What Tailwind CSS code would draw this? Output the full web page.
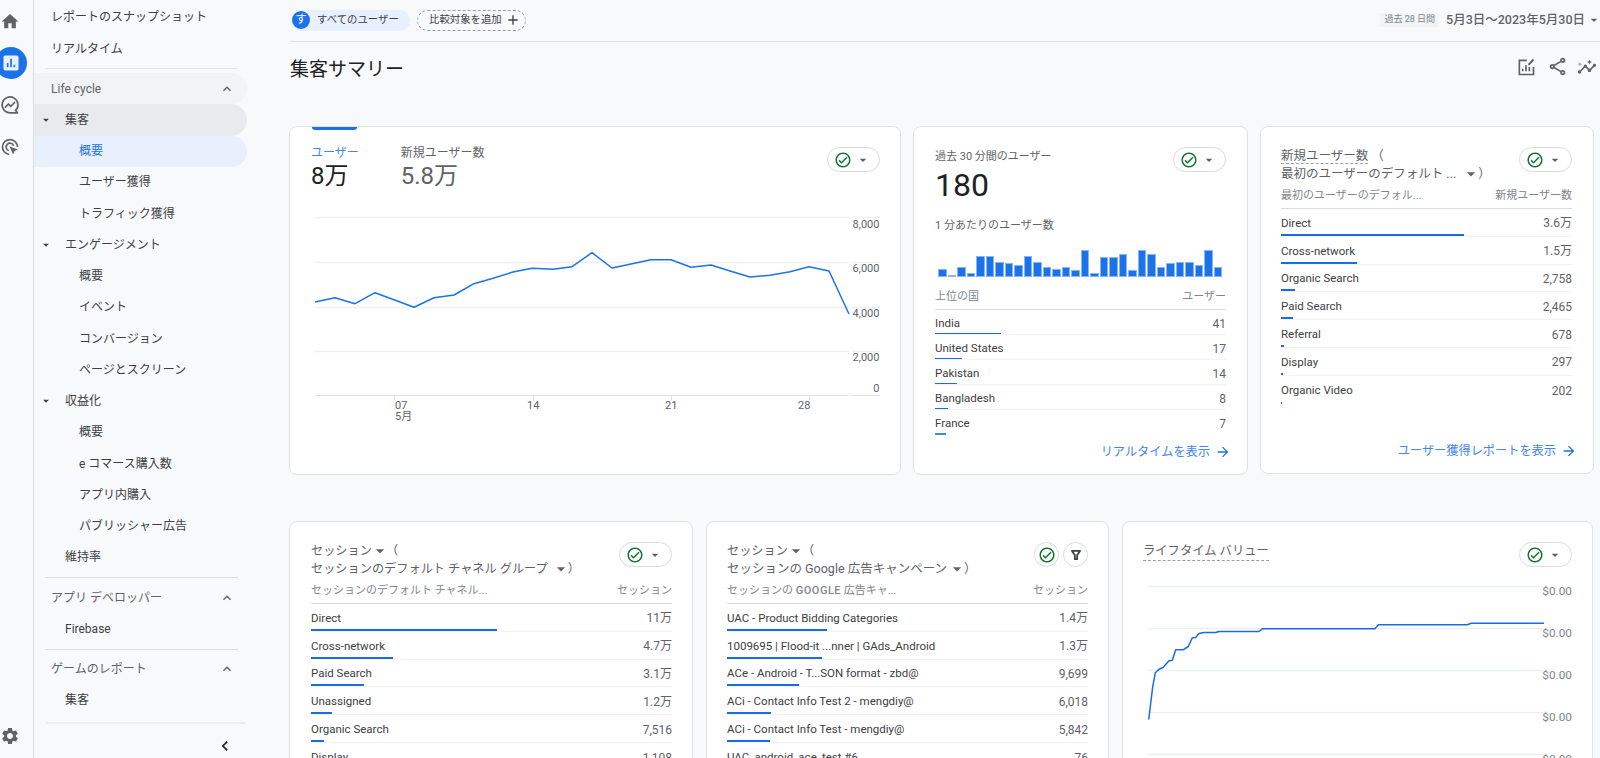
<!DOCTYPE html>
<html lang="ja">
<head>
    <meta charset="UTF-8" />
    <meta name="viewport" content="width=device-width, initial-scale=1.0" />
    <script src="https://cdn.jsdelivr.net/npm/@tailwindcss/browser@4"></script>
    <title>集客サマリー</title>
</head>
<body class="bg-[#f8f9fa]">
<div class="flex h-[758px] w-[1600px] overflow-hidden bg-[#f8f9fa] text-[#3c4043] [font-family:Roboto,'Noto_Sans_CJK_JP',sans-serif]">

    <!-- icon rail -->
    <div class="flex w-[34px] shrink-0 flex-col border-r border-[#dadce0] pt-[1px]">
        <div class="flex h-[41.6px] items-center justify-center pr-[13px]">
            <svg class="h-[21px] w-[21px] fill-[#5f6368]" viewBox="0 0 24 24"><path d="M10 20v-6h4v6h5v-8h3L12 3 2 12h3v8z"/></svg>
        </div>
        <div class="flex h-[41.6px] items-center">
            <div class="-ml-[5px] flex h-[32px] w-[32px] shrink-0 items-center justify-center rounded-full bg-[#1a73e8]">
                <svg class="h-[20px] w-[20px]" viewBox="0 0 24 24"><rect x="3" y="3" width="18" height="18" rx="2" fill="#e8f0fe"/><path d="M7 12h2v5H7zM11 7h2v10h-2zM15 14h2v3h-2z" fill="#1a73e8"/></svg>
            </div>
        </div>
        <div class="flex h-[41.6px] items-center justify-center pr-[13px]">
            <svg class="h-[20px] w-[20px]" viewBox="0 0 24 24" fill="none" stroke="#5f6368" stroke-width="2"><path d="M21 21l-2.4-2.2A9.5 9.5 0 1 0 12 21.4h9z" stroke-linejoin="round"/><path d="M6.5 14.5l3.5-3.5 3 2.5 4.5-4.5" stroke-linecap="round"/></svg>
        </div>
        <div class="flex h-[41.6px] items-center justify-center pr-[13px]">
            <svg class="h-[20px] w-[20px]" viewBox="0 0 24 24" fill="none" stroke="#5f6368" stroke-width="2"><path d="M11 21a9 9 0 1 1 10-9"/><path d="M10.5 16.5a4.7 4.7 0 1 1 6-6"/><path d="M11.5 11.5l10 3.6-4 1.8-1.8 4z" fill="#5f6368" stroke="none"/></svg>
        </div>
        <div class="mt-auto mb-[11px] flex justify-center pr-[13px]">
            <svg class="h-[22px] w-[22px] fill-[#5f6368]" viewBox="0 0 24 24"><path d="M19.14 12.94c.04-.3.06-.61.06-.94 0-.32-.02-.64-.07-.94l2.03-1.58c.18-.14.23-.41.12-.61l-1.92-3.32c-.12-.22-.37-.29-.59-.22l-2.39.96c-.5-.38-1.03-.7-1.62-.94l-.36-2.54c-.04-.24-.24-.41-.48-.41h-3.84c-.24 0-.43.17-.47.41l-.36 2.54c-.59.24-1.13.57-1.62.94l-2.39-.96c-.22-.08-.47 0-.59.22L2.74 8.87c-.12.21-.08.47.12.61l2.03 1.58c-.05.3-.09.63-.09.94s.02.64.07.94l-2.03 1.58c-.18.14-.23.41-.12.61l1.92 3.32c.12.22.37.29.59.22l2.39-.96c.5.38 1.03.7 1.62.94l.36 2.54c.05.24.24.41.48.41h3.84c.24 0 .44-.17.47-.41l.36-2.54c.59-.24 1.13-.56 1.62-.94l2.39.96c.22.08.47 0 .59-.22l1.92-3.32c.12-.22.07-.47-.12-.61l-2.01-1.58zM12 15.6c-1.98 0-3.6-1.62-3.6-3.6s1.62-3.6 3.6-3.6 3.6 1.62 3.6 3.6-1.62 3.6-3.6 3.6z"/></svg>
        </div>
    </div>

    <!-- report nav -->
    <nav class="flex w-[255px] shrink-0 flex-col pt-[1px] text-[12px] [&>*]:shrink-0">
        <div class="flex h-[32px] items-center pl-[17px]">レポートのスナップショット</div>
        <div class="flex h-[32px] items-center pl-[17px]">リアルタイム</div>
        <div class="ml-[11px] mt-[3px] mb-[4px] w-[193px] border-t border-[#e3e5e8]"></div>
        <div class="flex h-[31.25px] w-[213px] items-center justify-between rounded-r-full bg-[#f1f3f4] pl-[17px] pr-[12px] text-[#5f6368]">
            <span>Life cycle</span>
            <svg class="h-[16px] w-[16px] fill-[#5f6368]" viewBox="0 0 24 24"><path d="M7.4 15.4L12 10.8l4.6 4.6L18 14l-6-6-6 6z"/></svg>
        </div>
        <div class="flex h-[31.25px] w-[213px] items-center rounded-r-full bg-[#e8eaed] pl-[5px]">
            <svg class="mr-[12px] h-[14px] w-[14px] fill-[#3c4043]" viewBox="0 0 24 24"><path d="M7 10l5 5 5-5z"/></svg>集客
        </div>
        <div class="flex h-[31.25px] w-[213px] items-center rounded-r-full bg-[#e8f0fe] pl-[45px] text-[#1a73e8]">概要</div>
        <div class="flex h-[31.25px] items-center pl-[45px]">ユーザー獲得</div>
        <div class="flex h-[31.25px] items-center pl-[45px]">トラフィック獲得</div>
        <div class="flex h-[31.25px] items-center pl-[5px]">
            <svg class="mr-[12px] h-[14px] w-[14px] fill-[#3c4043]" viewBox="0 0 24 24"><path d="M7 10l5 5 5-5z"/></svg>エンゲージメント
        </div>
        <div class="flex h-[31.25px] items-center pl-[45px]">概要</div>
        <div class="flex h-[31.25px] items-center pl-[45px]">イベント</div>
        <div class="flex h-[31.25px] items-center pl-[45px]">コンバージョン</div>
        <div class="flex h-[31.25px] items-center pl-[45px]">ページとスクリーン</div>
        <div class="flex h-[31.25px] items-center pl-[5px]">
            <svg class="mr-[12px] h-[14px] w-[14px] fill-[#3c4043]" viewBox="0 0 24 24"><path d="M7 10l5 5 5-5z"/></svg>収益化
        </div>
        <div class="flex h-[31.25px] items-center pl-[45px]">概要</div>
        <div class="flex h-[31.25px] items-center pl-[45px]">e コマース購入数</div>
        <div class="flex h-[31.25px] items-center pl-[45px]">アプリ内購入</div>
        <div class="flex h-[31.25px] items-center pl-[45px]">パブリッシャー広告</div>
        <div class="flex h-[31.25px] items-center pl-[31px]">維持率</div>
        <div class="ml-[11px] mt-[4px] mb-[4px] w-[193px] border-t border-[#dadce0]"></div>
        <div class="flex h-[31.25px] w-[213px] items-center justify-between pl-[17px] pr-[12px] text-[#5f6368]">
            <span>アプリ デベロッパー</span>
            <svg class="h-[16px] w-[16px] fill-[#5f6368]" viewBox="0 0 24 24"><path d="M7.4 15.4L12 10.8l4.6 4.6L18 14l-6-6-6 6z"/></svg>
        </div>
        <div class="flex h-[31.25px] items-center pl-[31px]">Firebase</div>
        <div class="ml-[11px] mt-[4px] mb-[4px] w-[193px] border-t border-[#dadce0]"></div>
        <div class="flex h-[31.25px] w-[213px] items-center justify-between pl-[17px] pr-[12px] text-[#5f6368]">
            <span>ゲームのレポート</span>
            <svg class="h-[16px] w-[16px] fill-[#5f6368]" viewBox="0 0 24 24"><path d="M7.4 15.4L12 10.8l4.6 4.6L18 14l-6-6-6 6z"/></svg>
        </div>
        <div class="flex h-[31.25px] items-center pl-[31px]">集客</div>
        <div class="ml-[12px] mt-[6px] w-[199px] border-t-2 border-[#ebedef]"></div>
        <div class="flex h-[44px] w-[201px] items-center justify-end">
            <svg class="h-[20px] w-[20px] fill-[#202124]" viewBox="0 0 24 24"><path d="M15.4 7.4L14 6l-6 6 6 6 1.4-1.4L10.8 12z"/></svg>
        </div>
    </nav>

    <main class="min-w-0 flex-1">
        <!-- top bar -->
        <div class="ml-[1px] flex h-[42px] items-center justify-between border-b border-[#dee0e3] pb-[1px] pl-[2px]">
            <div class="flex items-center gap-[7px] text-[10.4px]">
                <div class="flex h-[21px] w-[118px] items-center rounded-full bg-[#e8f0fe]">
                    <span class="flex h-[18px] w-[18px] items-center justify-center rounded-full bg-[#1a73e8] text-[11px] text-white">す</span>
                    <span class="ml-[7px]">すべてのユーザー</span>
                </div>
                <div class="flex h-[21px] w-[109px] items-center rounded-full border border-dashed border-[#9aa0a6] pl-[11px]">
                    比較対象を追加
                    <svg class="ml-[3px] h-[16px] w-[16px] fill-[#3c4043]" viewBox="0 0 24 24"><path d="M19 13h-6v6h-2v-6H5v-2h6V5h2v6h6z"/></svg>
                </div>
            </div>
            <div class="-mr-[2px] flex items-center">
                <span class="flex h-[14px] items-center bg-[#f1f3f4] px-[4px] text-[9px] text-[#80868b]">過去 28 日間</span>
                <span class="ml-[7px] text-[12.5px] font-medium text-[#5f6368]">5月3日～2023年5月30日</span>
                <svg class="ml-[1px] h-[16px] w-[16px] fill-[#5f6368]" viewBox="0 0 24 24"><path d="M7 10l5 5 5-5z"/></svg>
            </div>
        </div>

        <!-- title row -->
        <div class="flex h-[84px] items-start justify-between pl-[1px] pt-[14px]">
            <h1 class="text-[19px] leading-[28px] text-[#202124]">集客サマリー</h1>
            <div class="mr-[5px] flex items-center">
                <svg class="h-[20px] w-[20px]" viewBox="0 0 24 24" fill="none" stroke="#5f6368" stroke-width="2"><path d="M13 4H4v17h17v-9"/><path d="M8 17v-3M12 17V10M16 17v-5" /><path d="M15 9.5l6-6.5" stroke-width="2.4"/></svg>
                <svg class="ml-[11px] h-[21px] w-[21px] fill-[#5f6368]" viewBox="0 0 24 24"><path d="M18 16.08c-.76 0-1.44.3-1.96.77L8.91 12.7c.05-.23.09-.46.09-.7s-.04-.47-.09-.7l7.05-4.11c.54.5 1.25.81 2.04.81 1.66 0 3-1.34 3-3s-1.34-3-3-3-3 1.34-3 3c0 .24.04.47.09.7L8.04 9.81C7.5 9.31 6.79 9 6 9c-1.66 0-3 1.34-3 3s1.34 3 3 3c.79 0 1.5-.31 2.04-.81l7.12 4.16c-.05.21-.08.43-.08.65 0 1.61 1.31 2.92 2.92 2.92 1.61 0 2.92-1.31 2.92-2.92s-1.31-2.92-2.92-2.92zM18 4c.55 0 1 .45 1 1s-.45 1-1 1-1-.45-1-1 .45-1 1-1zM6 13c-.55 0-1-.45-1-1s.45-1 1-1 1 .45 1 1-.45 1-1 1zm12 7.02c-.55 0-1-.45-1-1s.45-1 1-1 1 .45 1 1-.45 1-1 1z"/></svg>
                <svg class="-mr-[2px] ml-[9px] h-[20px] w-[20px] fill-[#5f6368]" viewBox="0 0 24 24"><path d="M21 8c-1.45 0-2.26 1.44-1.93 2.51l-3.55 3.56c-.3-.09-.74-.09-1.04 0l-2.55-2.55C12.27 10.45 11.46 9 10 9c-1.45 0-2.27 1.44-1.93 2.52l-4.56 4.55C2.44 15.74 1 16.55 1 18c0 1.1.9 2 2 2 1.45 0 2.26-1.44 1.93-2.51l4.55-4.56c.3.09.74.09 1.04 0l2.55 2.55C12.73 16.55 13.54 18 15 18c1.45 0 2.27-1.44 1.93-2.52l3.56-3.55c1.07.33 2.51-.48 2.51-1.93 0-1.1-.9-2-2-2z"/><path d="M15 9l.9-2L18 6l-2.1-.9L15 3l-.9 2.1L12 6l2.1 1zM3.500 11L4 9l2-.500L4 8l-.500-2L3 8l-2 .500L3 9z"/></svg>
            </div>
        </div>

        <!-- first row of cards -->
        <div class="flex gap-[12px] pr-[7px]">
            <section class="h-[349px] w-[612px] shrink-0 rounded-lg border border-[#dfe1e5] bg-white">
                <div class="ml-[22px] h-[3px] w-[45px] rounded-b-sm bg-[#1a73e8]"></div>
                <div class="flex items-start justify-between pl-[21px] pr-[20px] pt-[14px]">
                    <div class="flex gap-[42px]">
                        <div>
                            <div class="text-[12px] leading-[18px] text-[#4285f4]">ユーザー</div>
                            <div class="text-[24px] leading-[28px] text-[#202124]">8万</div>
                        </div>
                        <div>
                            <div class="text-[12px] leading-[18px] text-[#5f6368]">新規ユーザー数</div>
                            <div class="text-[24px] leading-[28px] text-[#5f6368]">5.8万</div>
                        </div>
                    </div>
                    <div class="mt-[3px] flex h-[25px] w-[53px] items-center rounded-full border border-[#dadce0] pl-[6px]">
                        <svg class="h-[18px] w-[18px] fill-[#137333]" viewBox="0 0 24 24"><path d="M12 2C6.48 2 2 6.48 2 12s4.48 10 10 10 10-4.48 10-10S17.52 2 12 2zm0 18c-4.41 0-8-3.59-8-8s3.59-8 8-8 8 3.59 8 8-3.59 8-8 8zm4.59-12.42L10 14.17l-2.59-2.58L6 13l4 4 8-8z"/></svg>
                        <svg class="ml-[3px] h-[16px] w-[16px] fill-[#5f6368]" viewBox="0 0 24 24"><path d="M7 10l5 5 5-5z"/></svg>
                    </div>
                </div>
                <svg class="mt-[10px] block" width="610" height="270" viewBox="0 0 610 270">
                    <g stroke="#eef0f2" stroke-width="1.500">
                        <path d="M25 17.500H559M562 17.500H589.500M25 62.500H559M562 62.500H589.500M25 107.500H559M562 107.500H589.500M25 151.500H559M562 151.500H589.500"/>
                    </g>
                    <path d="M25 195.500H559M562 195.500H589.500" stroke="#dfe1e5"/>
                    <path d="M104.500 195.500v5M243.500 195.500v5M381.500 195.500v5M519.500 195.500v5" stroke="#dfe1e5"/>
                    <polyline fill="none" stroke="#1a73e8" stroke-width="1.500" stroke-linejoin="round" points="25,102 45,97.700 65,103.700 85,92.700 104,99.700 124,107.300 144,97.700 164,95 184,83.700 203,78.300 223,72 242,68.300 263,69.300 282,66.700 302,52.700 322,68 341,64 361,59.700 381,59.700 401,67.300 421,65 440,71 460,77 480,75.300 500,71.700 519,66.700 539,71 559,114"/>
                    <g fill="#5f6368" font-size="11" text-anchor="end">
                        <text x="589.500" y="28">8,000</text>
                        <text x="589.500" y="72">6,000</text>
                        <text x="589.500" y="117">4,000</text>
                        <text x="589.500" y="161">2,000</text>
                        <text x="589.500" y="192">0</text>
                    </g>
                    <g fill="#5f6368" font-size="11">
                        <text x="105" y="209">07</text>
                        <text x="105" y="220">5月</text>
                        <text x="237" y="209">14</text>
                        <text x="375" y="209">21</text>
                        <text x="508" y="209">28</text>
                    </g>
                </svg>
            </section>

            <section class="flex h-[349px] w-[335px] shrink-0 flex-col rounded-lg border border-[#dfe1e5] bg-white pb-[13px] pl-[21px] pr-[21px] pt-[20px]">
                <div class="flex items-start justify-between">
                    <div class="mt-[2px]">
                        <div class="text-[11px] leading-[16px] text-[#5f6368]">過去 30 分間のユーザー</div>
                        <div class="mt-[1px] text-[32px] leading-[38px] text-[#202124]">180</div>
                    </div>
                    <div class="flex h-[25px] w-[53px] items-center rounded-full border border-[#dadce0] pl-[6px]">
                        <svg class="h-[18px] w-[18px] fill-[#137333]" viewBox="0 0 24 24"><path d="M12 2C6.48 2 2 6.48 2 12s4.48 10 10 10 10-4.48 10-10S17.52 2 12 2zm0 18c-4.41 0-8-3.59-8-8s3.59-8 8-8 8 3.59 8 8-3.59 8-8 8zm4.59-12.42L10 14.17l-2.59-2.58L6 13l4 4 8-8z"/></svg>
                        <svg class="ml-[3px] h-[16px] w-[16px] fill-[#5f6368]" viewBox="0 0 24 24"><path d="M7 10l5 5 5-5z"/></svg>
                    </div>
                </div>
                <div class="mt-[14px] text-[11px] leading-[16px] text-[#5f6368]">1 分あたりのユーザー数</div>
                <!-- per minute bars -->
                <div class="mt-[16px] flex h-[27px] items-end gap-[1px] pl-[3px]">
                    <div class="h-[8px] w-[8.500px] border border-[#8ab4f8] bg-[#1a73e8]"></div><div class="h-[2px] w-[8.500px] border border-[#8ab4f8] bg-[#1a73e8]"></div><div class="h-[10px] w-[8.500px] border border-[#8ab4f8] bg-[#1a73e8]"></div><div class="h-[4px] w-[8.500px] border border-[#8ab4f8] bg-[#1a73e8]"></div><div class="h-[21px] w-[8.500px] border border-[#8ab4f8] bg-[#1a73e8]"></div><div class="h-[21px] w-[8.500px] border border-[#8ab4f8] bg-[#1a73e8]"></div><div class="h-[15px] w-[8.500px] border border-[#8ab4f8] bg-[#1a73e8]"></div><div class="h-[14px] w-[8.500px] border border-[#8ab4f8] bg-[#1a73e8]"></div><div class="h-[12px] w-[8.500px] border border-[#8ab4f8] bg-[#1a73e8]"></div><div class="h-[21px] w-[8.500px] border border-[#8ab4f8] bg-[#1a73e8]"></div><div class="h-[15px] w-[8.500px] border border-[#8ab4f8] bg-[#1a73e8]"></div><div class="h-[10px] w-[8.500px] border border-[#8ab4f8] bg-[#1a73e8]"></div><div class="h-[8px] w-[8.500px] border border-[#8ab4f8] bg-[#1a73e8]"></div><div class="h-[10px] w-[8.500px] border border-[#8ab4f8] bg-[#1a73e8]"></div><div class="h-[7px] w-[8.500px] border border-[#8ab4f8] bg-[#1a73e8]"></div><div class="h-[27px] w-[8.500px] border border-[#8ab4f8] bg-[#1a73e8]"></div><div class="h-[4px] w-[8.500px] border border-[#8ab4f8] bg-[#1a73e8]"></div><div class="h-[20px] w-[8.500px] border border-[#8ab4f8] bg-[#1a73e8]"></div><div class="h-[20px] w-[8.500px] border border-[#8ab4f8] bg-[#1a73e8]"></div><div class="h-[23px] w-[8.500px] border border-[#8ab4f8] bg-[#1a73e8]"></div><div class="h-[7px] w-[8.500px] border border-[#8ab4f8] bg-[#1a73e8]"></div><div class="h-[27px] w-[8.500px] border border-[#8ab4f8] bg-[#1a73e8]"></div><div class="h-[23px] w-[8.500px] border border-[#8ab4f8] bg-[#1a73e8]"></div><div class="h-[10px] w-[8.500px] border border-[#8ab4f8] bg-[#1a73e8]"></div><div class="h-[14px] w-[8.500px] border border-[#8ab4f8] bg-[#1a73e8]"></div><div class="h-[15px] w-[8.500px] border border-[#8ab4f8] bg-[#1a73e8]"></div><div class="h-[15px] w-[8.500px] border border-[#8ab4f8] bg-[#1a73e8]"></div><div class="h-[12px] w-[8.500px] border border-[#8ab4f8] bg-[#1a73e8]"></div><div class="h-[27px] w-[8.500px] border border-[#8ab4f8] bg-[#1a73e8]"></div><div class="h-[10px] w-[8.500px] border border-[#8ab4f8] bg-[#1a73e8]"></div>
                </div>
                <div class="mt-[11px] flex h-[22px] justify-between border-b border-[#dadce0] pt-[1px] text-[11px] leading-[16px] text-[#80868b]"><span>上位の国</span><span>ユーザー</span></div>
                <div class="flex h-[25px] flex-col border-b border-[#f1f3f4] text-[11.5px]"><div class="flex flex-1 items-center justify-between pt-[5px]"><span>India</span><span class="text-[12px] text-[#5f6368]">41</span></div><div class="h-[2px] w-[66px] bg-[#1a6be8]"></div></div>
                <div class="flex h-[25px] flex-col border-b border-[#f1f3f4] text-[11.5px]"><div class="flex flex-1 items-center justify-between pt-[5px]"><span>United States</span><span class="text-[12px] text-[#5f6368]">17</span></div><div class="h-[2px] w-[27px] bg-[#1a6be8]"></div></div>
                <div class="flex h-[25px] flex-col border-b border-[#f1f3f4] text-[11.5px]"><div class="flex flex-1 items-center justify-between pt-[5px]"><span>Pakistan</span><span class="text-[12px] text-[#5f6368]">14</span></div><div class="h-[2px] w-[22px] bg-[#1a6be8]"></div></div>
                <div class="flex h-[25px] flex-col border-b border-[#f1f3f4] text-[11.5px]"><div class="flex flex-1 items-center justify-between pt-[5px]"><span>Bangladesh</span><span class="text-[12px] text-[#5f6368]">8</span></div><div class="h-[2px] w-[13px] bg-[#1a6be8]"></div></div>
                <div class="flex h-[25px] flex-col text-[11.5px]"><div class="flex flex-1 items-center justify-between pt-[5px]"><span>France</span><span class="text-[12px] text-[#5f6368]">7</span></div><div class="h-[2px] w-[11px] bg-[#4285f4]"></div></div>
                <div class="-mr-[5px] mt-auto flex items-center justify-end text-[12.2px] text-[#4285f4]">リアルタイムを表示
                    <svg class="ml-[5px] h-[16px] w-[16px] fill-[#1a73e8]" viewBox="0 0 24 24"><path d="M12 4l-1.400 1.400L16.200 11H4v2h12.200l-5.600 5.600L12 20l8-8z"/></svg>
                </div>
            </section>

            <section class="flex h-[348px] w-[334px] shrink-0 flex-col rounded-lg border border-[#dfe1e5] bg-white pb-[13px] pl-[20px] pr-[21px] pt-[20px]">
                <div class="flex items-start justify-between">
                    <div class="text-[12.500px] leading-[18px] text-[#5f6368]">
                        <div><span class="border-b border-dashed border-[#9aa0a6]">新規ユーザー数</span> （</div>
                        <div class="flex items-center">最初のユーザーのデフォルト ...<svg class="-my-[2px] -mr-[3px] ml-[5px] h-[20px] w-[20px] fill-[#5f6368]" viewBox="0 0 24 24"><path d="M7 10l5 5 5-5z"/></svg>）</div>
                    </div>
                    <div class="flex h-[25px] w-[53px] items-center rounded-full border border-[#dadce0] pl-[6px]">
                        <svg class="h-[18px] w-[18px] fill-[#137333]" viewBox="0 0 24 24"><path d="M12 2C6.48 2 2 6.48 2 12s4.48 10 10 10 10-4.48 10-10S17.52 2 12 2zm0 18c-4.41 0-8-3.59-8-8s3.59-8 8-8 8 3.59 8 8-3.59 8-8 8zm4.59-12.42L10 14.17l-2.59-2.58L6 13l4 4 8-8z"/></svg>
                        <svg class="ml-[3px] h-[16px] w-[16px] fill-[#5f6368]" viewBox="0 0 24 24"><path d="M7 10l5 5 5-5z"/></svg>
                    </div>
                </div>
                <div class="mt-[5px] flex h-[21px] justify-between border-b border-[#dadce0] text-[11px] leading-[16px] text-[#80868b]"><span>最初のユーザーのデフォル...</span><span>新規ユーザー数</span></div>
                <div class="flex h-[27.800px] flex-col border-b border-[#f1f3f4] text-[11.5px]"><div class="flex flex-1 items-center justify-between pt-[4px]"><span>Direct</span><span class="text-[12px] text-[#5f6368]">3.6万</span></div><div class="h-[2px] w-[183px] bg-[#1a6be8]"></div></div>
                <div class="flex h-[27.800px] flex-col border-b border-[#f1f3f4] text-[11.5px]"><div class="flex flex-1 items-center justify-between pt-[4px]"><span>Cross-network</span><span class="text-[12px] text-[#5f6368]">1.5万</span></div><div class="h-[2px] w-[76px] bg-[#1a6be8]"></div></div>
                <div class="flex h-[27.800px] flex-col border-b border-[#f1f3f4] text-[11.5px]"><div class="flex flex-1 items-center justify-between pt-[4px]"><span>Organic Search</span><span class="text-[12px] text-[#5f6368]">2,758</span></div><div class="h-[2px] w-[14px] bg-[#1a6be8]"></div></div>
                <div class="flex h-[27.800px] flex-col border-b border-[#f1f3f4] text-[11.5px]"><div class="flex flex-1 items-center justify-between pt-[4px]"><span>Paid Search</span><span class="text-[12px] text-[#5f6368]">2,465</span></div><div class="h-[2px] w-[12px] bg-[#1a6be8]"></div></div>
                <div class="flex h-[27.800px] flex-col border-b border-[#f1f3f4] text-[11.5px]"><div class="flex flex-1 items-center justify-between pt-[4px]"><span>Referral</span><span class="text-[12px] text-[#5f6368]">678</span></div><div class="h-[2px] w-[3px] bg-[#1a6be8]"></div></div>
                <div class="flex h-[27.800px] flex-col border-b border-[#f1f3f4] text-[11.5px]"><div class="flex flex-1 items-center justify-between pt-[4px]"><span>Display</span><span class="text-[12px] text-[#5f6368]">297</span></div><div class="h-[2px] w-[2px] bg-[#1a6be8]"></div></div>
                <div class="flex h-[27.800px] flex-col text-[11.5px]"><div class="flex flex-1 items-center justify-between pt-[4px]"><span>Organic Video</span><span class="text-[12px] text-[#5f6368]">202</span></div><div class="h-[2px] w-[1px] bg-[#1a6be8]"></div></div>
                <div class="-mr-[5px] mt-auto flex items-center justify-end text-[12.2px] text-[#4285f4]">ユーザー獲得レポートを表示
                    <svg class="ml-[5px] h-[16px] w-[16px] fill-[#1a73e8]" viewBox="0 0 24 24"><path d="M12 4l-1.400 1.400L16.200 11H4v2h12.200l-5.600 5.600L12 20l8-8z"/></svg>
                </div>
            </section>
        </div>

        <!-- second row of cards -->
        <div class="mt-[46px] flex gap-[13px]">
            <section class="h-[300px] w-[404px] shrink-0 rounded-lg border border-[#dfe1e5] bg-white pl-[21px] pr-[20px] pt-[20px]">
                <div class="flex items-start justify-between">
                    <div class="text-[12.2px] leading-[18px] text-[#5f6368]">
                        <div class="flex items-center">セッション<svg class="-my-[2px] -ml-[2px] -mr-[4px] h-[20px] w-[20px] fill-[#5f6368]" viewBox="0 0 24 24"><path d="M7 10l5 5 5-5z"/></svg>（</div>
                        <div class="flex items-center">セッションのデフォルト チャネル グループ<svg class="-my-[2px] -mr-[3px] ml-[3px] h-[20px] w-[20px] fill-[#5f6368]" viewBox="0 0 24 24"><path d="M7 10l5 5 5-5z"/></svg>）</div>
                    </div>
                    <div class="flex h-[25px] w-[53px] items-center rounded-full border border-[#dadce0] pl-[6px]">
                        <svg class="h-[18px] w-[18px] fill-[#137333]" viewBox="0 0 24 24"><path d="M12 2C6.48 2 2 6.48 2 12s4.48 10 10 10 10-4.48 10-10S17.52 2 12 2zm0 18c-4.41 0-8-3.59-8-8s3.59-8 8-8 8 3.59 8 8-3.59 8-8 8zm4.59-12.42L10 14.17l-2.59-2.58L6 13l4 4 8-8z"/></svg>
                        <svg class="ml-[3px] h-[16px] w-[16px] fill-[#5f6368]" viewBox="0 0 24 24"><path d="M7 10l5 5 5-5z"/></svg>
                    </div>
                </div>
                <div class="mt-[5px] flex h-[21px] justify-between border-b border-[#dadce0] text-[11px] leading-[16px] text-[#80868b]"><span>セッションのデフォルト チャネル...</span><span>セッション</span></div>
                <div class="flex h-[27.800px] flex-col border-b border-[#f1f3f4] text-[11.5px]"><div class="flex flex-1 items-center justify-between pt-[4px]"><span>Direct</span><span class="text-[12px] text-[#5f6368]">11万</span></div><div class="h-[2px] w-[186px] bg-[#1a6be8]"></div></div>
                <div class="flex h-[27.800px] flex-col border-b border-[#f1f3f4] text-[11.5px]"><div class="flex flex-1 items-center justify-between pt-[4px]"><span>Cross-network</span><span class="text-[12px] text-[#5f6368]">4.7万</span></div><div class="h-[2px] w-[82px] bg-[#1a6be8]"></div></div>
                <div class="flex h-[27.800px] flex-col border-b border-[#f1f3f4] text-[11.5px]"><div class="flex flex-1 items-center justify-between pt-[4px]"><span>Paid Search</span><span class="text-[12px] text-[#5f6368]">3.1万</span></div><div class="h-[2px] w-[53px] bg-[#1a6be8]"></div></div>
                <div class="flex h-[27.800px] flex-col border-b border-[#f1f3f4] text-[11.5px]"><div class="flex flex-1 items-center justify-between pt-[4px]"><span>Unassigned</span><span class="text-[12px] text-[#5f6368]">1.2万</span></div><div class="h-[2px] w-[21px] bg-[#1a6be8]"></div></div>
                <div class="flex h-[27.800px] flex-col border-b border-[#f1f3f4] text-[11.5px]"><div class="flex flex-1 items-center justify-between pt-[4px]"><span>Organic Search</span><span class="text-[12px] text-[#5f6368]">7,516</span></div><div class="h-[2px] w-[13px] bg-[#1a6be8]"></div></div>
                <div class="flex h-[27.800px] flex-col text-[11.5px]"><div class="flex flex-1 items-center justify-between pt-[4px]"><span>Display</span><span class="text-[12px] text-[#5f6368]">1,108</span></div><div class="h-[2px] w-[3px] bg-[#1a6be8]"></div></div>
            </section>

            <section class="h-[300px] w-[403px] shrink-0 rounded-lg border border-[#dfe1e5] bg-white pl-[20px] pr-[20px] pt-[20px]">
                <div class="flex items-start justify-between">
                    <div class="text-[12.500px] leading-[18px] text-[#5f6368]">
                        <div class="flex items-center text-[12.2px]">セッション<svg class="-my-[2px] -ml-[2px] -mr-[4px] h-[20px] w-[20px] fill-[#5f6368]" viewBox="0 0 24 24"><path d="M7 10l5 5 5-5z"/></svg>（</div>
                        <div class="flex items-center">セッションの Google 広告キャンペーン<svg class="-my-[2px] -mr-[3px] h-[20px] w-[20px] fill-[#5f6368]" viewBox="0 0 24 24"><path d="M7 10l5 5 5-5z"/></svg>）</div>
                    </div>
                    <div class="flex gap-[4px]">
                        <div class="flex h-[25px] w-[25px] items-center justify-center rounded-full border border-[#dadce0]">
                            <svg class="h-[18px] w-[18px] fill-[#137333]" viewBox="0 0 24 24"><path d="M12 2C6.48 2 2 6.48 2 12s4.48 10 10 10 10-4.48 10-10S17.52 2 12 2zm0 18c-4.41 0-8-3.59-8-8s3.59-8 8-8 8 3.59 8 8-3.59 8-8 8zm4.59-12.42L10 14.17l-2.59-2.58L6 13l4 4 8-8z"/></svg>
                        </div>
                        <div class="flex h-[25px] w-[25px] items-center justify-center rounded-full border border-[#dadce0]">
                            <svg class="h-[14px] w-[14px]" viewBox="0 0 24 24" fill="none" stroke="#3c4043" stroke-width="3"><path d="M5 5h14l-5 7v7h-4v-7z" stroke-linejoin="round"/></svg>
                        </div>
                    </div>
                </div>
                <div class="mt-[5px] flex h-[21px] justify-between border-b border-[#dadce0] text-[11px] leading-[16px] text-[#80868b]"><span>セッションの <span class="font-medium tracking-[0.5px]">GOOGLE</span> 広告キャ...</span><span>セッション</span></div>
                <div class="flex h-[27.800px] flex-col border-b border-[#f1f3f4] text-[11.5px]"><div class="flex flex-1 items-center justify-between pt-[4px]"><span>UAC - Product Bidding Categories</span><span class="text-[12px] text-[#5f6368]">1.4万</span></div><div class="h-[2px] w-[100px] bg-[#1a6be8]"></div></div>
                <div class="flex h-[27.800px] flex-col border-b border-[#f1f3f4] text-[11.5px]"><div class="flex flex-1 items-center justify-between pt-[4px]"><span>1009695 | Flood-it ...nner | GAds_Android</span><span class="text-[12px] text-[#5f6368]">1.3万</span></div><div class="h-[2px] w-[95px] bg-[#1a6be8]"></div></div>
                <div class="flex h-[27.800px] flex-col border-b border-[#f1f3f4] text-[11.5px]"><div class="flex flex-1 items-center justify-between pt-[4px]"><span>ACe - Android - T...SON format - zbd@</span><span class="text-[12px] text-[#5f6368]">9,699</span></div><div class="h-[2px] w-[72px] bg-[#1a6be8]"></div></div>
                <div class="flex h-[27.800px] flex-col border-b border-[#f1f3f4] text-[11.5px]"><div class="flex flex-1 items-center justify-between pt-[4px]"><span>ACi - Contact Info Test 2 - mengdiy@</span><span class="text-[12px] text-[#5f6368]">6,018</span></div><div class="h-[2px] w-[44px] bg-[#1a6be8]"></div></div>
                <div class="flex h-[27.800px] flex-col border-b border-[#f1f3f4] text-[11.5px]"><div class="flex flex-1 items-center justify-between pt-[4px]"><span>ACi - Contact Info Test - mengdiy@</span><span class="text-[12px] text-[#5f6368]">5,842</span></div><div class="h-[2px] w-[43px] bg-[#1a6be8]"></div></div>
                <div class="flex h-[27.800px] flex-col text-[11.5px]"><div class="flex flex-1 items-center justify-between pt-[4px]"><span>UAC_android_ace_test #6</span><span class="text-[12px] text-[#5f6368]">76</span></div><div class="h-[2px] w-[1px] bg-[#1a6be8]"></div></div>
            </section>

            <section class="h-[300px] w-[471px] shrink-0 rounded-lg border border-[#dfe1e5] bg-white">
                <div class="flex items-start justify-between pl-[20px] pr-[20px] pt-[20px]">
                    <span class="mt-[1px] border-b border-dashed border-[#9aa0a6] text-[12.300px] leading-[17px] text-[#5f6368]">ライフタイム バリュー</span>
                    <div class="flex h-[25px] w-[53px] items-center rounded-full border border-[#dadce0] pl-[6px]">
                        <svg class="h-[18px] w-[18px] fill-[#137333]" viewBox="0 0 24 24"><path d="M12 2C6.48 2 2 6.48 2 12s4.48 10 10 10 10-4.48 10-10S17.52 2 12 2zm0 18c-4.41 0-8-3.59-8-8s3.59-8 8-8 8 3.59 8 8-3.59 8-8 8zm4.59-12.42L10 14.17l-2.59-2.58L6 13l4 4 8-8z"/></svg>
                        <svg class="ml-[3px] h-[16px] w-[16px] fill-[#5f6368]" viewBox="0 0 24 24"><path d="M7 10l5 5 5-5z"/></svg>
                    </div>
                </div>
                <svg class="mt-[8px] block" width="470" height="200" viewBox="0 0 470 200">
                    <path d="M25 11.500H420M25 53.500H420M25 95.500H420M25 137.500H420M25 179.500H420" stroke="#eceef0" stroke-width="1.500"/>
                    <polyline fill="none" stroke="#1a6be8" stroke-width="1.500" stroke-linejoin="round" transform="translate(0 9.500)" points="25.700,135 29.700,102.300 32.300,88.300 36,84.700 40,83 46,76.300 49.300,75.700 52.700,65.300 60,65.300 65.300,62 69.300,53.300 72.700,53 76,49 81,48 92.700,48 96,47 136,47 139.300,44.300 252,44.300 255.300,40.300 344.300,40.300 348.300,38.700 421,38.700"/>
                    <g fill="#80868b" font-size="11.800" text-anchor="end">
                        <text x="449" y="20">$0.00</text>
                        <text x="449" y="62">$0.00</text>
                        <text x="449" y="104">$0.00</text>
                        <text x="449" y="146">$0.00</text>
                        <text x="449" y="188">$0.00</text>
                    </g>
                </svg>
            </section>
        </div>
    </main>
</div>
</body>
</html>
